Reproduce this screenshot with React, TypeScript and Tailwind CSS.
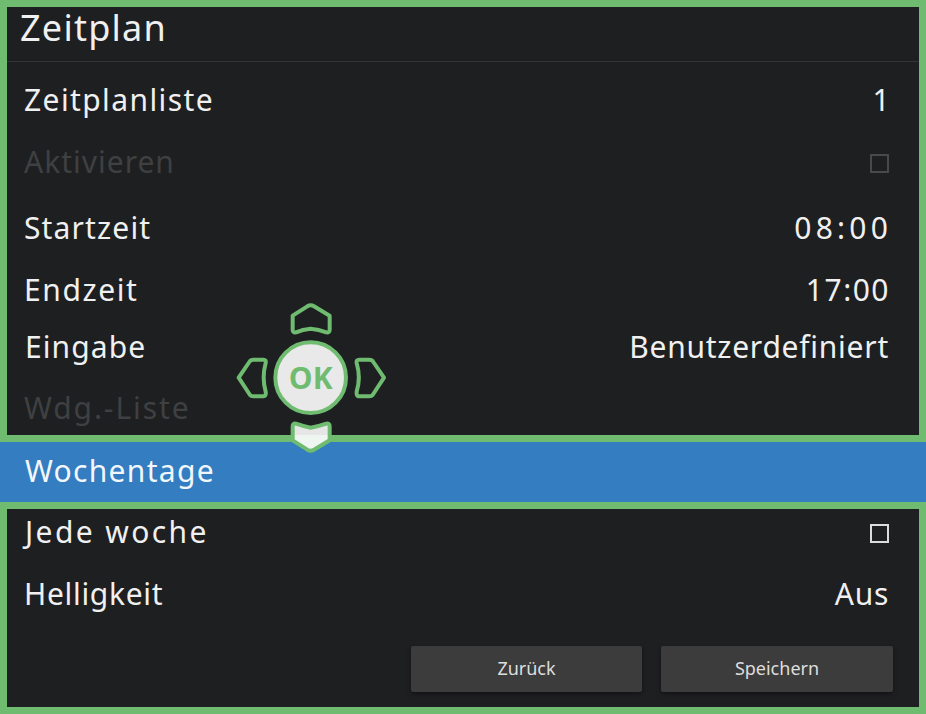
function Row({ label, value, dim, className, valueClass }: { label: string; value?: React.ReactNode; dim?: boolean; className: string; valueClass?: string }) {
  return (
    <div className={`flex items-center justify-between pl-[17px] pr-[31px] text-[30px] ${dim ? "text-[#3f4042]" : "text-[#f0f0f0]"} ${className}`}>
      <span>{label}</span>
      {value && <span className={valueClass}>{value}</span>}
    </div>
  );
}

function Check({ dim }: { dim?: boolean }) {
  return <div className={`mt-[4px] -mr-px h-[19px] w-[19px] border-2 ${dim ? "border-[#48494b]" : "border-[#dcdcdc]"}`} />;
}

function Dpad() {
  return (
    <svg className="absolute left-[220px] top-[295px]" width="180" height="170" viewBox="0 0 540 510">
      <defs>
        <linearGradient id="downFill" x1="0" y1="0" x2="0" y2="1">
          <stop offset="0.42" stopColor="#e5e6e5" />
          <stop offset="0.42" stopColor="#eff5f1" />
        </linearGradient>
      </defs>
      <g stroke="#6fbc71" strokeWidth="12" strokeLinejoin="round" fill="none">
        <path d="M218 62 L262 34 Q272 28 282 34 L329 62 L329 104 Q329 114 319 112 Q296 103 272 101 Q248 103 228 112 Q218 114 218 104 Z" />
        <path d="M56 248 L90 198 Q93 194 100 194 L130 194 Q139 194 137 204 Q125 248 137 290 Q139 304 130 304 L100 304 Q93 304 90 300 Z" />
        <path d="M492 248 L458 198 Q455 194 448 194 L418 194 Q408 194 410 204 Q423 248 410 290 Q408 304 418 304 L448 304 Q455 304 458 300 Z" />
        <path d="M218 394 Q218 384 228 386 Q250 394 272 398 Q296 394 319 386 Q329 384 329 394 L329 436 L282 464 Q272 470 262 464 L218 436 Z" fill="url(#downFill)" />
        <circle cx="272" cy="248" r="106" fill="#e8e9e8" />
      </g>
      <text x="272" y="281" textAnchor="middle" fill="#6fbc71" fontSize="90" fontWeight="700" fontFamily="'Open Sans', sans-serif">OK</text>
    </svg>
  );
}

export default function App() {
  return (
    <div className="relative h-[714px] w-[926px] overflow-hidden bg-[#6fbc71] p-[7px] font-['Noto_Sans',sans-serif]">
      <div className="flex h-full flex-col bg-[#1e1f21]">
        <div className="flex h-[55px] items-center border-b border-[#333436] pb-[12px] pl-[13px] text-[36px] tracking-[1.25px] text-[#f0f0f0]">Zeitplan</div>
        <div className="flex flex-col pt-[7px]">
          <Row className="h-[62px] pb-[2px] tracking-[1.4px]" label="Zeitplanliste" value="1" valueClass="-mr-[3px]" />
          <Row className="h-[62px] pb-[2px] tracking-[1px]" label="Aktivieren" dim value={<Check dim />} />
          <Row className="mt-[4px] h-[62px] pb-[2px] tracking-[1.15px]" label="Startzeit" value="08:00" valueClass="-mr-[4px] tracking-[4.2px]" />
          <Row className="h-[62px] pb-[2px] tracking-[1.6px]" label="Endzeit" value="17:00" valueClass="-mr-[2px] tracking-[1.5px]" />
          <Row className="h-[52px] pb-[2px] pl-[18px] tracking-[1.1px]" label="Eingabe" value="Benutzerdefiniert" valueClass="-mr-px tracking-[0.75px]" />
          <Row className="h-[62px] pt-[6px] tracking-[1.9px]" label="Wdg.-Liste" dim />
        </div>
        <div className="-mx-[7px] border-y-[7px] border-[#6fbc71]">
          <Row className="h-[60px] bg-[#337dc0] pb-[4px] pl-[25px] tracking-[1.3px] text-[#f2f7fb]" label="Wochentage" />
        </div>
        <Row className="h-[46px] pb-[2px] pl-[18px] tracking-[2.4px]" label="Jede woche" value={<Check />} />
        <Row className="h-[78px] pb-[2px] tracking-[0.7px]" label="Helligkeit" value="Aus" valueClass="-mr-px" />
        <div className="mt-[13px] flex justify-end gap-[19px] pr-[26px] text-[18px] leading-[24px] text-[#dedede]">
          <button className="flex h-[46px] w-[231px] items-center justify-center rounded-[2px] bg-[#3c3c3c] pb-[2px] shadow-[0_2px_4px_rgba(0,0,0,0.4)]">Zurück</button>
          <button className="flex h-[46px] w-[232px] items-center justify-center rounded-[2px] bg-[#3c3c3c] pb-[2px] shadow-[0_2px_4px_rgba(0,0,0,0.4)]">Speichern</button>
        </div>
      </div>
      <Dpad />
    </div>
  );
}
